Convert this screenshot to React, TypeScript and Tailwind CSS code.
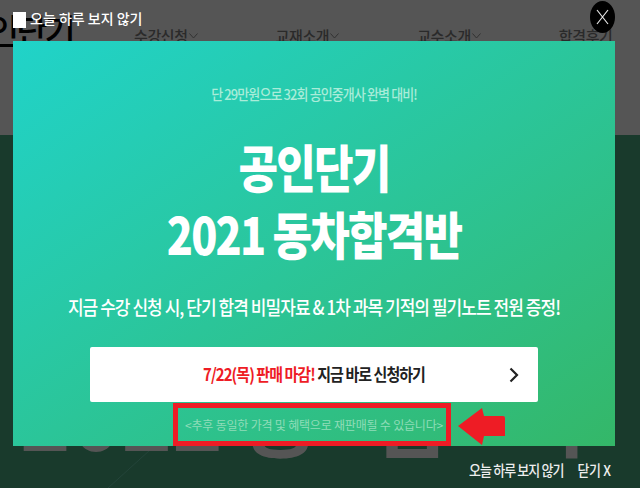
const kr = "font-['Noto_Sans_CJK_KR','Noto_Sans',sans-serif]"

function NavItem({ label, chevron = true }: { label: string; chevron?: boolean }) {
  return (
    <div className="flex items-center gap-[1px] text-[15px] font-medium text-[#2a2a2a] tracking-[-0.4px] leading-none">
      <span>{label}</span>
      {chevron && (
        <svg width="9" height="6" viewBox="0 0 9 6" fill="none" stroke="#333" strokeWidth="1">
          <path d="M0.5 0.5 L4.5 5 L8.5 0.5" />
        </svg>
      )}
    </div>
  )
}

export default function App() {
  return (
    <div className={`relative w-[640px] h-[488px] overflow-hidden bg-[#193a2c] ${kr}`}>
      {/* page behind the popup */}
      <header className="relative h-[135px] bg-[#555555] overflow-hidden">
        <span className="absolute left-[-12px] top-[13px] text-[34px] font-medium text-black leading-none tracking-[-3px]">인단기</span>
        <nav className="flex pt-[28px] pl-[134px] gap-[78px]">
          <NavItem label="수강신청" />
          <NavItem label="교재소개" />
          <NavItem label="교수소개" />
          <NavItem label="합격후기" chevron={false} />
        </nav>
      </header>
      <svg className="absolute left-[100px] top-[450px]" width="60" height="38" viewBox="0 0 60 38" fill="none" stroke="#24443a" strokeWidth="1">
        <path d="M50 0 L8 38" />
      </svg>
      <div className="absolute left-[20px] top-[371px] flex text-[86px] font-bold text-[#555555] leading-none whitespace-nowrap">
        <span>2022</span>
        <span className="ml-[18px]">동</span>
        <span className="ml-[52px]">합</span>
        <span className="ml-[56px]">격</span>
      </div>

      {/* popup */}
      <div className="absolute left-[13px] top-[41px] w-[602px] h-[405px] flex flex-col items-center bg-gradient-to-br from-[#20d3c9] to-[#34b768]">
        <p className="mt-[43px] text-[13px] font-medium leading-[20px] tracking-[-0.9px] text-[#a9ecd9] scale-y-110">
          단 29만원으로 32회 공인중개사 완벽 대비!
        </p>
        <h1 className="mt-[39px] text-[43px] font-black leading-[56px] tracking-[-1.8px] text-white text-center scale-y-120">
          공인단기
          <br />
          2021 동차합격반
        </h1>
        <p className="mt-[39px] text-[17px] font-medium leading-[26px] tracking-[-0.95px] text-white whitespace-nowrap scale-y-115">
          지금 수강 신청 시, 단기 합격 비밀자료 &amp; 1차 과목 기적의 필기노트 전원 증정!
        </p>
        <button className="relative mt-[27px] w-[448px] h-[55px] rounded-[2px] bg-white flex items-center justify-center text-[15px] font-bold tracking-[-0.95px] text-[#222222]">
          <span className="scale-y-115">
            <span className="text-[#ee1c25]">7/22(목) 판매 마감!</span> 지금 바로 신청하기
          </span>
          <svg className="absolute right-[19px] top-[20px]" width="10" height="16" viewBox="0 0 10 16" fill="none" stroke="#222" strokeWidth="2.2">
            <path d="M1.5 1.5 L8 8 L1.5 14.5" />
          </svg>
        </button>
        {/* red marker drawn over the screenshot */}
        <div className="relative mt-[1px] ml-[-4px] flex">
          <div className="w-[278px] h-[43px] pl-[4px] border-[5px] border-[#ee1c25] flex items-center justify-center text-[12px] font-normal tracking-[-0.2px] text-[#8fdcb8] whitespace-nowrap">
            &lt;추후 동일한 가격 및 혜택으로 재판매될 수 있습니다&gt;
          </div>
          <svg className="absolute left-[285px] top-[5px]" width="47" height="37" viewBox="0 0 47 37" fill="#ee1c25">
            <path d="M0 18 L24 0 L26 8 L45 8 Q47 8 47 10 L47 28 L26 28 L24 37 Z" />
          </svg>
        </div>
      </div>

      {/* top controls */}
      <div className="absolute left-[13px] top-[10px] flex items-start gap-[4px] text-[14px] font-medium leading-[17px] text-white">
        <span className="w-[13px] h-[16px] mt-[2px] bg-white" />
        <span>오늘 하루 보지 않기</span>
      </div>
      <button className="absolute left-[590px] top-[1px] w-[25px] h-[32px] rounded-[50%] bg-black flex items-center justify-center">
        <svg width="13" height="16" viewBox="0 0 13 16" fill="none" stroke="#e5e5e5" strokeWidth="1.2">
          <path d="M1 1 L12 15 M12 1 L1 15" />
        </svg>
      </button>

      {/* bottom controls */}
      <div className="absolute left-[469px] top-[461px] flex gap-[14px] text-[13px] font-medium leading-[18px] tracking-[-0.9px] text-[#eeeeee] whitespace-nowrap scale-y-110">
        <span>오늘 하루 보지 않기</span>
        <span className="tracking-[-0.4px]">닫기 X</span>
      </div>
    </div>
  )
}
